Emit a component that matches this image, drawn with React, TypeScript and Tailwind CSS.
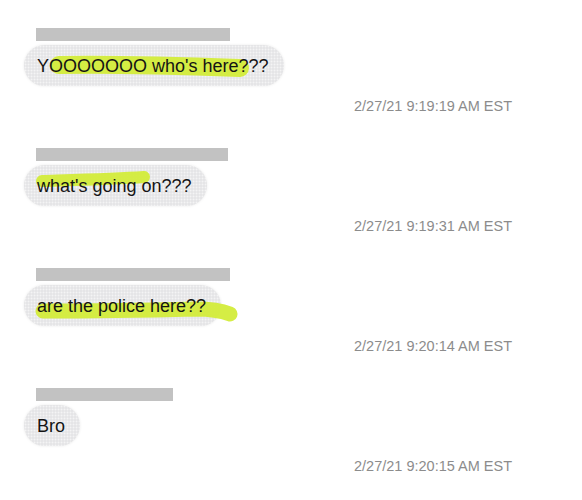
import React from "react";

type Msg = {
  text: string;
  barWidth: number;
  time: string;
  highlight: { d: string; width: number; stroke: number };
};

const messages: Msg[] = [
  {
    text: "YOOOOOOO who's here???",
    barWidth: 194,
    time: "2/27/21 9:19:19 AM EST",
    highlight: { d: "M35 20 C90 19 160 21 216 23", width: 258, stroke: 18 },
  },
  {
    text: "what's going on???",
    barWidth: 192,
    time: "2/27/21 9:19:31 AM EST",
    highlight: { d: "M18 16 C50 15 90 14 120 12", width: 180, stroke: 12 },
  },
  {
    text: "are the police here??",
    barWidth: 194,
    time: "2/27/21 9:20:14 AM EST",
    highlight: { d: "M19 26 C70 26 130 25 172 24 C188 24 198 26 206 29", width: 220, stroke: 15 },
  },
  {
    text: "Bro",
    barWidth: 137,
    time: "2/27/21 9:20:15 AM EST",
    highlight: { d: "", width: 0, stroke: 0 },
  },
];

const Message: React.FC<{ msg: Msg }> = ({ msg }) => {
  return (
    <div className="flex flex-col h-[120px] shrink-0">
      {/* redacted sender name */}
      <div className="ml-[12px] h-[13px] bg-[#c2c2c2]" style={{ width: msg.barWidth }} />

      {/* bubble */}
      <div className="mt-[4px] self-start relative h-[41px] flex items-center pl-[13px] pr-[15px] rounded-full bg-[#e5e5e7] bg-[radial-gradient(#f4f4f5_0.8px,transparent_1.1px)] bg-[length:3px_3px] shadow-[0_0_3px_#ebebeb]">
        {msg.highlight.d && (
          <svg
            className="absolute left-0 top-0 pointer-events-none"
            width={msg.highlight.width}
            height={41}
            viewBox={`0 0 ${msg.highlight.width} 41`}
          >
            <path
              d={msg.highlight.d}
              fill="none"
              stroke="#d3ec3a"
              strokeWidth={msg.highlight.stroke}
              strokeLinecap="round"
              opacity={0.95}
            />
          </svg>
        )}
        <span className="relative text-[18px] leading-none text-[#141414] font-['Liberation_Sans',Arial,sans-serif]">
          {msg.text}
        </span>
      </div>

      {/* timestamp */}
      <div className="mt-[12px] pl-[330px] h-[16px] flex items-center text-[14.5px] leading-none text-[#8c8c8c] font-['Liberation_Sans',Arial,sans-serif]">
        {msg.time}
      </div>
    </div>
  );
};

const App: React.FC = () => {
  return (
    <div className="h-[500px] w-full bg-white flex flex-col pl-[24px] pt-[28px] overflow-hidden">
      {messages.map((m, i) => (
        <Message key={i} msg={m} />
      ))}
      <div className="mt-auto -ml-[24px] h-[3px] bg-[#ececec] shrink-0" />
    </div>
  );
};

export default App;
